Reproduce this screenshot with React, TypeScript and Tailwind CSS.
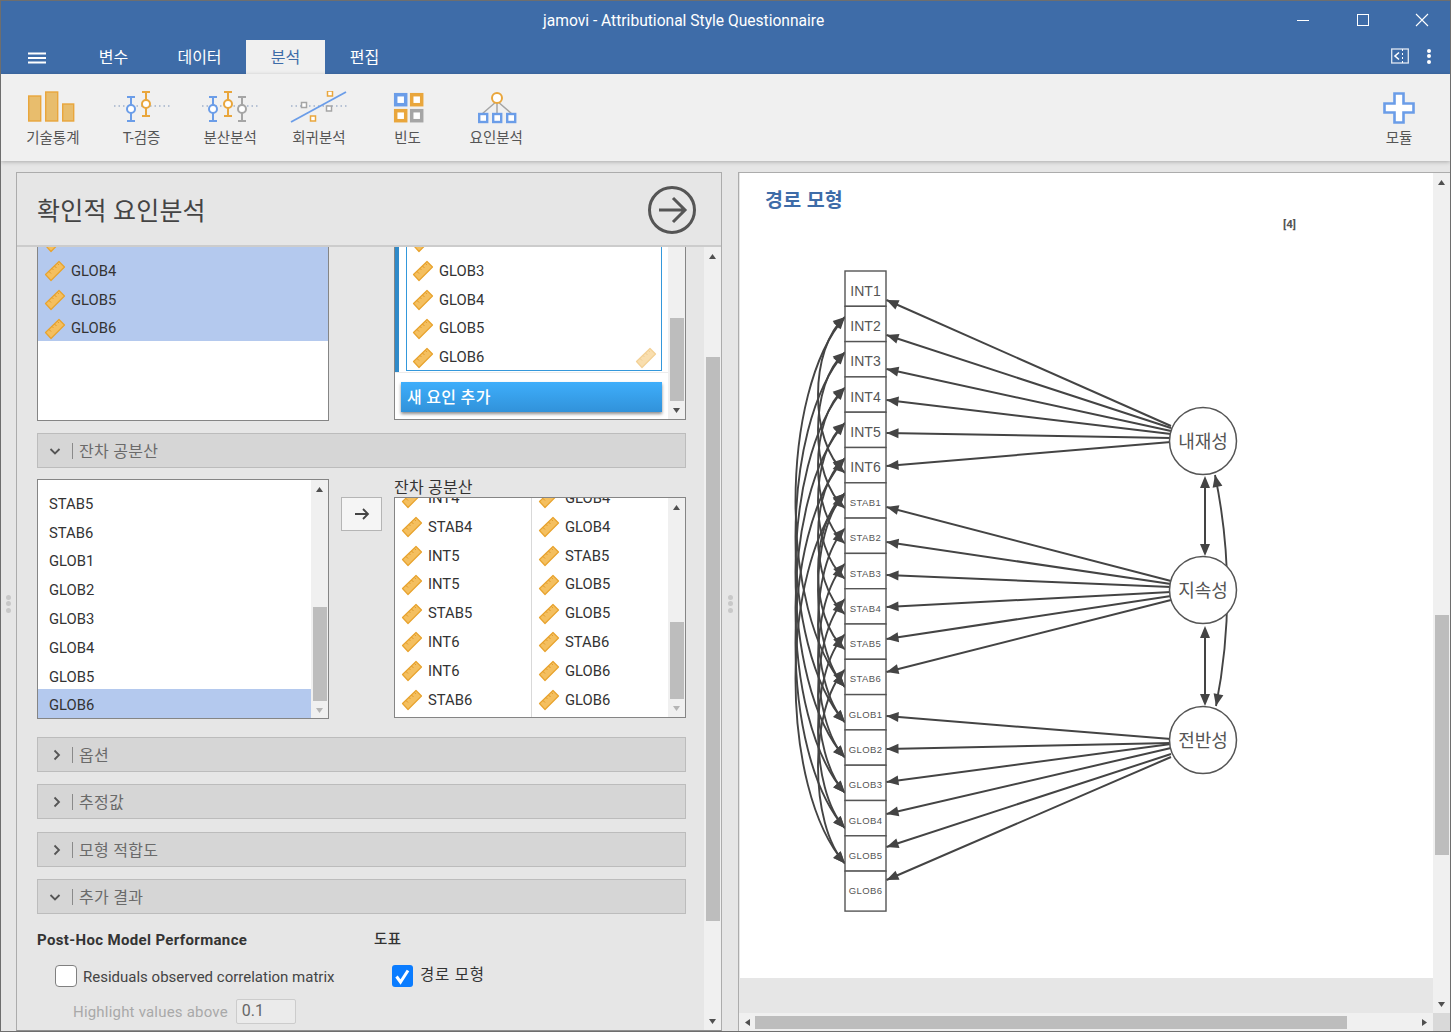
import React from "react";

const DARK = "#444444";

function Ruler({ faded = false }: { faded?: boolean }) {
  return (
    <svg width="22" height="22" viewBox="0 0 22 22" className={faded ? "shrink-0 opacity-50" : "shrink-0"}>
      <path d="M1.5 14.5 15 1.5l5.5 5.5L7 20.5z" fill="#f4bf5f" stroke="#e8a32e" strokeWidth="1.2" strokeLinejoin="round" />
      <path d="M5 11.5l2 2M8 8.5l1.4 1.4M10.5 6l2 2M13.5 3.5l1.4 1.4" stroke="#e09a2a" strokeWidth="1" fill="none" />
    </svg>
  );
}

function Tri({ dir, muted = false }: { dir: "up" | "down" | "left" | "right"; muted?: boolean }) {
  const d = { up: "M0 5 3.5 0 7 5z", down: "M0 0h7L3.5 5z", left: "M5 0v7L0 3.5z", right: "M0 0v7l5-3.5z" }[dir];
  const s = dir === "up" || dir === "down" ? { w: 7, h: 5 } : { w: 5, h: 7 };
  return (
    <svg width={s.w} height={s.h} viewBox={`0 0 ${s.w} ${s.h}`}>
      <path d={d} fill={muted ? "#b5b5b5" : "#505050"} />
    </svg>
  );
}

function VScroll({ thumb, up = true, down = true, downMuted = false }: { thumb: string; up?: boolean; down?: boolean; downMuted?: boolean }) {
  return (
    <div className="w-[17px] shrink-0 bg-[#f0f0f0] flex flex-col items-center self-stretch">
      {up && (
        <div className="h-[18px] shrink-0 flex items-center justify-center">
          <Tri dir="up" />
        </div>
      )}
      <div className={`w-[14px] bg-[#bdbdbd] shrink-0 ${thumb}`} />
      {down && (
        <div className="h-[18px] shrink-0 mt-auto flex items-center justify-center">
          <Tri dir="down" muted={downMuted} />
        </div>
      )}
    </div>
  );
}

function VarRow({ name, className = "" }: { name: string; className?: string }) {
  return (
    <div className={`flex items-center h-[28.8px] shrink-0 text-[14.8px] leading-none text-[#333] ${className}`}>
      <Ruler />
      <span className="ml-[5px]">{name}</span>
    </div>
  );
}

function Accordion({ label, open = false, className = "" }: { label: string; open?: boolean; className?: string }) {
  return (
    <div className={`w-[649px] h-[35px] bg-[#d6d6d6] border border-[#bcbcbc] flex items-center ${className}`}>
      <div className="w-[34px] flex justify-center shrink-0">
        <svg width="12" height="12" viewBox="0 0 12 12">
          {open ? (
            <path d="M1.5 4 6 8.5 10.5 4" fill="none" stroke="#555" strokeWidth="1.8" />
          ) : (
            <path d="M4.5 1.5 9 6l-4.5 4.5" fill="none" stroke="#555" strokeWidth="1.8" transform="translate(1 0)" />
          )}
        </svg>
      </div>
      <div className="w-px h-[16px] bg-[#8a8a8a] shrink-0" />
      <span className="ml-[6px] pt-[3px] text-[16px] leading-[20px] text-[#6a6a6a] tracking-[0.3px]">{label}</span>
    </div>
  );
}

function Bar({ x, top, bottom, cy, color }: { x: number; top: number; bottom: number; cy: number; color: string }) {
  return (
    <g stroke={color} strokeWidth="2" fill="none">
      <path d={`M${x - 4} ${top}h8M${x - 4} ${bottom}h8M${x} ${top}V${bottom}`} />
      <circle cx={x} cy={cy} r="4" fill="#fff" />
    </g>
  );
}

const BLUE = "#6b9de8";
const ORANGE = "#e9a63c";
const GRAY = "#a5a5a5";

function IconDesc() {
  return (
    <svg width="50" height="34" viewBox="0 0 50 34">
      <g fill="#e8bd6d" stroke={ORANGE} strokeWidth="1.4">
        <rect x="0.7" y="5" width="12" height="25" />
        <rect x="17.7" y="1" width="12" height="29" />
        <rect x="34.7" y="13" width="11" height="17" />
      </g>
    </svg>
  );
}
function IconT() {
  return (
    <svg width="60" height="34" viewBox="0 0 60 34">
      <path d="M2 15h56" stroke="#7b93b8" strokeDasharray="1.5 3" />
      <Bar x={19} top={6} bottom={30} cy={18} color={BLUE} />
      <Bar x={34} top={1} bottom={25} cy={13} color={ORANGE} />
    </svg>
  );
}
function IconAnova() {
  return (
    <svg width="60" height="34" viewBox="0 0 60 34">
      <path d="M2 15h56" stroke="#7b93b8" strokeDasharray="1.5 3" />
      <Bar x={13} top={6} bottom={30} cy={18} color={BLUE} />
      <Bar x={28} top={1} bottom={25} cy={13} color={ORANGE} />
      <Bar x={42} top={6} bottom={30} cy={18} color={GRAY} />
    </svg>
  );
}
function IconReg() {
  return (
    <svg width="60" height="34" viewBox="0 0 60 34">
      <path d="M2 15h56" stroke="#7b93b8" strokeDasharray="1.5 3" />
      <path d="M2 31 57 1" stroke={BLUE} strokeWidth="1.8" />
      <g fill="#fff" strokeWidth="1.5">
        <rect x="12.5" y="11.5" width="5" height="5" stroke={GRAY} />
        <rect x="38.5" y="0" width="5" height="5" stroke={ORANGE} />
        <rect x="37.5" y="15" width="5" height="5" stroke={GRAY} />
        <rect x="21.5" y="25" width="5" height="5" stroke={ORANGE} />
      </g>
    </svg>
  );
}
function IconFreq() {
  return (
    <svg width="32" height="32" viewBox="0 0 32 32" className="ml-[2px]">
      <g fill="#fff" strokeWidth="3.5">
        <rect x="2.7" y="2.7" width="10" height="10" stroke={BLUE} />
        <rect x="18.7" y="2.7" width="10" height="10" stroke={ORANGE} />
        <rect x="2.7" y="18.7" width="10" height="10" stroke={ORANGE} />
        <rect x="18.7" y="18.7" width="10" height="10" stroke={GRAY} />
      </g>
    </svg>
  );
}
function IconFactor() {
  return (
    <svg width="42" height="34" viewBox="0 0 42 34" className="ml-[4px]">
      <path d="M20 10 5 23M20 10v13M20 10l15 13" stroke={GRAY} strokeWidth="1.5" />
      <circle cx="20" cy="7" r="5" fill="#fff" stroke={ORANGE} strokeWidth="2" />
      <g fill="#fff" stroke={BLUE} strokeWidth="2.4">
        <rect x="2.2" y="23" width="8" height="8" />
        <rect x="16.2" y="23" width="8" height="8" />
        <rect x="30.2" y="23" width="8" height="8" />
      </g>
    </svg>
  );
}
function IconPlus() {
  return (
    <svg width="32" height="32" viewBox="0 0 32 32">
      <path d="M11.5 1.5h9v10h10v9h-10v10h-9v-10h-10v-9h10z" fill="#fff" stroke={BLUE} strokeWidth="2.6" />
    </svg>
  );
}

function RibbonBtn({ icon, label, w = "w-[88.7px]" }: { icon: React.ReactNode; label: string; w?: string }) {
  return (
    <div className={`${w} shrink-0 flex flex-col items-center`}>
      <div className="h-[34px] flex items-center justify-center">{icon}</div>
      <div className="mt-[5px] text-[14.5px] leading-[18px] text-[#555]">{label}</div>
    </div>
  );
}

function Dots() {
  return (
    <div className="flex flex-col gap-[1.5px] mt-[4px]">
      <div className="w-[5px] h-[5px] rounded-full bg-[#c8c8c8]" />
      <div className="w-[5px] h-[5px] rounded-full bg-[#c8c8c8]" />
      <div className="w-[5px] h-[5px] rounded-full bg-[#c8c8c8]" />
    </div>
  );
}

const LINE = "#444444";

function head(x: number, y: number, dx: number, dy: number) {
  const l = Math.hypot(dx, dy);
  const ux = dx / l;
  const uy = dy / l;
  const L = 12;
  const W = 5;
  const bx = x - ux * L;
  const by = y - uy * L;
  return `${x},${y} ${bx - uy * W},${by + ux * W} ${bx + uy * W},${by - ux * W}`;
}

function Straight({ x1, y1, x2, y2 }: { x1: number; y1: number; x2: number; y2: number }) {
  return (
    <g>
      <line x1={x1} y1={y1} x2={x2} y2={y2} stroke={LINE} strokeWidth="2" />
      <polygon points={head(x2, y2, x2 - x1, y2 - y1)} fill={LINE} />
    </g>
  );
}

function Arc({ y1, y2, b }: { y1: number; y2: number; b: number }) {
  const h = y2 - y1;
  const cx = 845 - b;
  const c1 = y1 + h * 0.2;
  const c2 = y2 - h * 0.2;
  return (
    <g>
      <path d={`M845 ${y1}C${cx} ${c1} ${cx} ${c2} 845 ${y2}`} fill="none" stroke={LINE} strokeWidth="1.9" />
      <polygon points={head(845, y1, b, y1 - c1)} fill={LINE} />
      <polygon points={head(845, y2, b, y2 - c2)} fill={LINE} />
    </g>
  );
}

const BOXES = ["INT1", "INT2", "INT3", "INT4", "INT5", "INT6", "STAB1", "STAB2", "STAB3", "STAB4", "STAB5", "STAB6", "GLOB1", "GLOB2", "GLOB3", "GLOB4", "GLOB5", "GLOB6"];
const TIPS = [300, 335, 369, 400, 433, 466, 507, 542, 575, 607, 639, 672, 716, 749, 782, 814, 847, 880];
const TAILS = [426, 428, 431, 434, 438, 442, 581, 584, 587, 592, 596, 600, 739, 743, 744, 748, 754, 757];

function PathDiagram() {
  const step = 35.3;
  const idx = [0, 1, 2, 3, 4, 5];
  return (
    <svg width="460" height="660" viewBox="785 262 460 660" className="block ml-[45px] mt-[31px]">
      {idx.map((i) => (
        <g key={i}>
          <Arc y1={317 + step * i} y2={687 + step * i} b={66} />
          <Arc y1={317 + step * i} y2={473 + step * i} b={36} />
          <Arc y1={493 + step * i} y2={687 + step * i} b={36} />
        </g>
      ))}
      {BOXES.map((b, i) => {
        const y = 271 + step * i;
        const h = i === 17 ? 40 : step;
        return (
          <g key={b}>
            <rect x="845" y={y} width="41" height={h} fill="#fff" stroke="#555" strokeWidth="1.4" />
            <text
              x="865.5"
              y={y + h / 2 + (i < 6 ? 7 : i === 17 ? 3 : 5.5)}
              textAnchor="middle"
              fontSize={i < 6 ? 14 : 9.5}
              letterSpacing={i < 6 ? 0 : 0.4}
              fill="#555"
              fontFamily="'Liberation Sans',sans-serif"
            >
              {b}
            </text>
          </g>
        );
      })}
      {TIPS.map((t, i) => (
        <Straight key={i} x1={1171} y1={TAILS[i]} x2={886.5} y2={t} />
      ))}
      <path d="M1215 475Q1239 590 1216 706" fill="none" stroke={LINE} strokeWidth="1.9" />
      <polygon points={head(1215, 475, -3, -14)} fill={LINE} />
      <polygon points={head(1216, 706, -3, 14)} fill={LINE} />
      <line x1="1205" y1="480" x2="1205" y2="553" stroke={LINE} strokeWidth="2" />
      <polygon points={head(1205, 476, 0, -1)} fill={LINE} />
      <polygon points={head(1205, 556, 0, 1)} fill={LINE} />
      <line x1="1205" y1="630" x2="1205" y2="703" stroke={LINE} strokeWidth="2" />
      <polygon points={head(1205, 626, 0, -1)} fill={LINE} />
      <polygon points={head(1205, 706, 0, 1)} fill={LINE} />
      {[
        [441, "내재성"],
        [590, "지속성"],
        [740, "전반성"],
      ].map(([cy, t]) => (
        <g key={t as string}>
          <circle cx="1203" cy={cy as number} r="33.5" fill="#fff" stroke="#555" strokeWidth="1.5" />
          <text x="1203" y={(cy as number) + 7} textAnchor="middle" fontSize="18" fill="#555">
            {t as string}
          </text>
        </g>
      ))}
    </svg>
  );
}

export default function App() {
  return (
    <div className="w-[1451px] h-[1032px] overflow-hidden flex flex-col border border-[#6e6e6e] bg-[#e6e6e6] font-[Roboto,'Noto_Sans_CJK_KR',sans-serif]">
      {/* title bar */}
      <div className="h-[39px] shrink-0 bg-[#3e6ca8] flex items-center text-white">
        <div className="ml-[542px] flex-1 pt-[3px] text-[15.6px]">jamovi - Attributional Style Questionnaire</div>
        <svg width="133" height="14" viewBox="0 0 133 14" className="mr-[21px] mb-[2px]">
          <path d="M1 7.5h12" stroke="#fff" strokeWidth="1" />
          <rect x="61.5" y="1.5" width="11" height="11" fill="none" stroke="#fff" />
          <path d="M120 1l12 12M132 1l-12 12" stroke="#fff" strokeWidth="1.1" />
        </svg>
      </div>
      {/* tabs */}
      <div className="h-[34px] shrink-0 bg-[#3e6ca8] flex items-stretch text-white text-[16px]">
        <div className="w-[73px] flex items-center pl-[27px]">
          <svg width="18" height="12" viewBox="0 0 18 12" className="mt-[2px]">
            <path d="M0 1.5h18M0 6h18M0 10.5h18" stroke="#fff" strokeWidth="2.2" />
          </svg>
        </div>
        <div className="w-[79px] pt-[2px] flex items-center justify-center">변수</div>
        <div className="w-[79px] pt-[2px] ml-[7px] flex items-center justify-center">데이터</div>
        <div className="w-[79px] pt-[2px] ml-[7px] flex items-center justify-center bg-[#f0f0f0] text-[#3e6ca8]">분석</div>
        <div className="w-[79px] pt-[2px] flex items-center justify-center">편집</div>
        <div className="flex-1" />
        <svg width="18" height="16" viewBox="0 0 18 16" className="self-center mr-[18px] mb-[2px]">
          <rect x="0.7" y="1" width="16.6" height="14" fill="none" stroke="#dfe7f2" strokeWidth="1.3" />
          <path d="M8 4.5 4 8l4 3.5" fill="none" stroke="#fff" strokeWidth="1.6" />
          <path d="M11.5 1v14" stroke="#fff" strokeDasharray="2 2" />
        </svg>
        <div className="self-center flex flex-col gap-[1.5px] mr-[19px] mb-[2px]">
          <div className="w-[4px] h-[4px] rounded-full bg-white" />
          <div className="w-[4px] h-[4px] rounded-full bg-white" />
          <div className="w-[4px] h-[4px] rounded-full bg-white" />
        </div>
      </div>
      {/* ribbon */}
      <div className="h-[87px] shrink-0 bg-[#f0f0f0] shadow-[0_1px_4px_rgba(0,0,0,0.25)] relative flex items-start pt-[17px] pl-[7.5px] pr-[7px]">
        <RibbonBtn icon={<IconDesc />} label="기술통계" />
        <RibbonBtn icon={<IconT />} label="T-검증" />
        <RibbonBtn icon={<IconAnova />} label="분산분석" />
        <RibbonBtn icon={<IconReg />} label="회귀분석" />
        <RibbonBtn icon={<IconFreq />} label="빈도" />
        <RibbonBtn icon={<IconFactor />} label="요인분석" />
        <div className="flex-1" />
        <RibbonBtn icon={<IconPlus />} label="모듈" w="w-[88px]" />
      </div>
      {/* main */}
      <div className="flex-1 min-h-0 flex pt-[11px]">
        <div className="w-[15px] shrink-0 flex items-center justify-center">
          <Dots />
        </div>
        {/* left panel */}
        <div className="w-[706px] shrink-0 border border-[#acacac] border-b-[#8f8f8f] flex flex-col min-h-0">
          <div className="h-[74px] shrink-0 border-b-2 border-[#cccccc] flex items-center justify-between pl-[20px] pr-[25px]">
            <span className="text-[25px] text-[#444] tracking-[0.2px] pt-[5px]">확인적 요인분석</span>
            <svg width="48" height="48" viewBox="0 0 48 48" className="mt-[1px]">
              <circle cx="24" cy="24" r="22.5" fill="none" stroke="#555" strokeWidth="3" />
              <path d="M11 24h25M25 12l12 12-12 12" fill="none" stroke="#555" strokeWidth="3" />
            </svg>
          </div>
          <div className="flex-1 min-h-0 flex">
            <div className="w-[687px] shrink-0 overflow-hidden pl-[20px]">
              {/* row 1 */}
              <div className="flex h-[174px]">
                <div className="w-[292px] h-[174px] bg-white border-x border-b border-[#858585] overflow-hidden">
                  <div className="-mt-[19px] h-[113px] overflow-hidden bg-[#b4c9ee] pl-[6px]">
                    <VarRow name="GLOB3" />
                    <VarRow name="GLOB4" />
                    <VarRow name="GLOB5" />
                    <VarRow name="GLOB6" />
                  </div>
                </div>
                <div className="w-[292px] h-[173px] ml-[65px] bg-white border-x border-b border-[#858585] flex overflow-hidden">
                  <div className="flex-1 flex flex-col min-w-0">
                    <div className="h-[126px] shrink-0 flex border-b border-[#ececec]">
                      <div className="w-[4px] bg-[#2f8ac9] shrink-0" />
                      <div className="w-[256px] ml-[7px] h-[124px] border-x border-b border-[#3498db] overflow-hidden pl-[5px]">
                        <div className="-mt-[19px]">
                          <VarRow name="GLOB2" />
                          <VarRow name="GLOB3" />
                          <VarRow name="GLOB4" />
                          <VarRow name="GLOB5" />
                          <div className="flex items-center justify-between pr-[4px]">
                            <VarRow name="GLOB6" />
                            <Ruler faded />
                          </div>
                        </div>
                      </div>
                    </div>
                    <div className="ml-[6px] mt-[9px] w-[261px] h-[30px] bg-gradient-to-b from-[#3eaefb] to-[#3192da] shadow-[0_2px_3px_rgba(0,0,0,0.45)] text-white text-[16px] font-medium tracking-[0.3px] pl-[6px] leading-[31px]">
                      새 요인 추가
                    </div>
                  </div>
                  <VScroll up={false} thumb="mt-[71px] h-[83px]" />
                </div>
              </div>
              <Accordion label="잔차 공분산" open className="mt-[12px]" />
              {/* row 2 */}
              <div className="flex mt-[11px]">
                <div className="w-[292px] h-[240px] bg-white border border-[#858585] flex overflow-hidden">
                  <div className="flex-1 flex flex-col justify-end">
                    {["STAB5", "STAB6", "GLOB1", "GLOB2", "GLOB3", "GLOB4", "GLOB5"].map((n) => (
                      <div key={n} className="h-[28.8px] pl-[11px] pt-[4px] flex items-center text-[14.8px] text-[#333]">
                        {n}
                      </div>
                    ))}
                    <div className="h-[29px] pl-[11px] pt-[3px] flex items-center text-[14.8px] text-[#333] bg-[#b4c9ee]">GLOB6</div>
                  </div>
                  <VScroll thumb="mt-[109px] h-[94px]" downMuted />
                </div>
                <div className="w-[41px] h-[34px] ml-[12px] mt-[18px] bg-[#f5f5f5] border border-[#b5b5b5] flex items-center justify-center">
                  <svg width="16" height="14" viewBox="0 0 16 14">
                    <path d="M1 7h13M9 2l5 5-5 5" fill="none" stroke={DARK} strokeWidth="1.8" />
                  </svg>
                </div>
                <div className="ml-[12px] w-[292px]">
                  <div className="h-[18px] text-[16px] leading-[17px] text-[#333] tracking-[0.2px]">잔차 공분산</div>
                  <div className="h-[221px] bg-white border border-[#858585] flex overflow-hidden">
                    <div className="w-[137px] shrink-0 border-r border-[#d9d9d9] pl-[6px] overflow-hidden">
                      <div className="-mt-[4px]">
                        {["", "STAB4", "INT5", "INT5", "STAB5", "INT6", "INT6", "STAB6"].map((n, i) =>
                          i === 0 ? (
                            <div key={i} className="-mt-[14px]">
                              <VarRow name="INT4" />
                            </div>
                          ) : (
                            <VarRow key={i} name={n} />
                          ),
                        )}
                      </div>
                    </div>
                    <div className="flex-1 pl-[6px] overflow-hidden">
                      <div className="-mt-[4px]">
                        {["", "GLOB4", "STAB5", "GLOB5", "GLOB5", "STAB6", "GLOB6", "GLOB6"].map((n, i) =>
                          i === 0 ? (
                            <div key={i} className="-mt-[14px]">
                              <VarRow name="GLOB4" />
                            </div>
                          ) : (
                            <VarRow key={i} name={n} />
                          ),
                        )}
                      </div>
                    </div>
                    <VScroll thumb="mt-[106px] h-[77px]" downMuted />
                  </div>
                </div>
              </div>
              <Accordion label="옵션" className="mt-[18px]" />
              <Accordion label="추정값" className="mt-[12px]" />
              <Accordion label="모형 적합도" className="mt-[13px]" />
              <Accordion label="추가 결과" open className="mt-[12px]" />
              {/* options */}
              <div className="flex mt-[16px]">
                <div className="w-[337px] shrink-0">
                  <div className="h-[20px] text-[15px] leading-[20px] font-bold text-[#333] tracking-[0.35px]">Post-Hoc Model Performance</div>
                  <div className="flex items-center h-[22px] mt-[15px] pl-[18px]">
                    <div className="w-[22px] h-[22px] rounded-[4px] bg-white border border-[#808080] shrink-0" />
                    <span className="ml-[6px] pt-[2px] text-[15px] leading-[20px] text-[#444]">Residuals observed correlation matrix</span>
                  </div>
                  <div className="flex items-center h-[25px] mt-[12px] pl-[36px]">
                    <span className="pt-[1px] text-[15px] leading-[20px] text-[#a9a9a9] tracking-[0.2px]">Highlight values above</span>
                    <div className="ml-[8px] w-[60px] h-[25px] bg-[#ebebeb] border border-[#cccccc] rounded-[2px] pl-[5px] text-[16px] leading-[22px] text-[#666]">0.1</div>
                  </div>
                </div>
                <div>
                  <div className="h-[16px] pt-[2px] text-[14.5px] leading-[16px] font-medium text-[#333] tracking-[0.5px]">도표</div>
                  <div className="flex items-center mt-[18px] ml-[18px]">
                    <div className="w-[21px] h-[22px] rounded-[3px] bg-[#0a7cff] flex items-center justify-center shrink-0">
                      <svg width="17" height="17" viewBox="0 0 17 17">
                        <path d="M2.5 8.5 6.5 14 14 2.5" fill="none" stroke="#fff" strokeWidth="3" />
                      </svg>
                    </div>
                    <span className="ml-[7px] text-[15.5px] text-[#333] tracking-[0.8px] pb-[1px]">경로 모형</span>
                  </div>
                </div>
              </div>
            </div>
            <VScroll thumb="mt-[92px] h-[564px]" />
          </div>
        </div>
        <div className="w-[16px] shrink-0 flex items-center justify-center">
          <Dots />
        </div>
        {/* right panel */}
        <div className="flex-1 min-w-0 flex flex-col border-l border-t border-[#acacac]">
          <div className="flex-1 min-h-0 flex">
            <div className="flex-1 min-w-0 flex flex-col pl-[1px]">
              <div className="flex-1 min-h-0 bg-white overflow-hidden">
                <div className="pl-[25px] pt-[16px] h-[39px] text-[19.5px] leading-[24px] font-bold text-[#3e6ca8] tracking-[0.3px]">경로 모형</div>
                <div className="ml-[543px] mt-[5px] h-[14px] text-[11.5px] leading-[14px] font-bold text-[#555]">[4]</div>
                <PathDiagram />
              </div>
              <div className="h-[35px] shrink-0 bg-[#e6e6e6]" />
            </div>
            <VScroll thumb="mt-[424px] h-[240px]" />
          </div>
          <div className="h-[18px] shrink-0 flex">
            <div className="flex-1 bg-[#f0f0f0] flex items-center">
              <div className="w-[16px] flex justify-center shrink-0">
                <Tri dir="left" />
              </div>
              <div className="w-[592px] h-[13px] bg-[#bdbdbd] shrink-0" />
              <div className="flex-1" />
              <div className="w-[18px] flex justify-center shrink-0">
                <Tri dir="right" />
              </div>
            </div>
            <div className="w-[17px] bg-[#d9d9d9] shrink-0" />
          </div>
        </div>
      </div>
    </div>
  );
}
